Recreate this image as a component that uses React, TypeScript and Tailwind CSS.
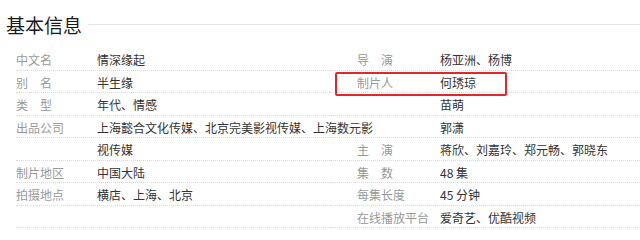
const leftRows = [
  { label: '中文名', value: '情深缘起' },
  { label: '别　名', value: '半生缘' },
  { label: '类　型', value: '年代、情感' },
  { label: '出品公司', value: '上海懿合文化传媒、北京完美影视传媒、上海数元影' },
  { label: '', value: '视传媒' },
  { label: '制片地区', value: '中国大陆' },
  { label: '拍摄地点', value: '横店、上海、北京' },
  { label: '', value: '' },
];

const rightRows = [
  { label: '导　演', value: '杨亚洲、杨博' },
  { label: '制片人', value: '何琇琼', marked: true },
  { label: '', value: '苗萌' },
  { label: '', value: '郭潇' },
  { label: '主　演', value: '蒋欣、刘嘉玲、郑元畅、郭晓东' },
  { label: '集　数', value: '48 集' },
  { label: '每集长度', value: '45 分钟' },
  { label: '在线播放平台', value: '爱奇艺、优酷视频' },
];

type Row = { label: string; value: string; marked?: boolean };

function InfoRow({ row, labelWidth }: { row: Row; labelWidth: string }) {
  return (
    <div className="relative flex h-[22.5px] items-center border-b border-dotted border-[#d9d9d9] pt-[3px]">
      <span className={`${labelWidth} shrink-0 whitespace-nowrap text-[#999]`}>{row.label}</span>
      <span className="whitespace-nowrap text-[#333]">{row.value}</span>
      {row.marked && (
        <div className="absolute left-[5px] top-[1px] h-[24px] w-[172px] rounded-[2px] border-2 border-[#e3262b]" />
      )}
    </div>
  );
}

export default function App() {
  return (
    <div
      className="h-[240px] w-[640px] overflow-hidden bg-white"
      style={{ fontFamily: '"Noto Sans CJK SC", "Noto Sans", sans-serif' }}
    >
      {/* Title */}
      <div className="flex h-[48px] items-center gap-[6px] pl-[6px]">
        <h2 className="text-[19px] leading-none text-[#1a1a1a]">基本信息</h2>
        <div className="h-px flex-1 bg-[#e6e6e6]" />
      </div>

      {/* Info columns */}
      <div className="flex pl-[6px] text-[12px] leading-none">
        <div className="w-[324px]">
          {leftRows.map((row, i) => (
            <div key={i} className="pl-[10px]">
              <InfoRow row={row} labelWidth="w-[81px]" />
            </div>
          ))}
        </div>
        <div className="flex-1">
          {rightRows.map((row, i) => (
            <InfoRow key={i} row={{ ...row, label: row.label }} labelWidth="w-[83px] pl-[27px] box-content" />
          ))}
        </div>
      </div>
    </div>
  );
}
